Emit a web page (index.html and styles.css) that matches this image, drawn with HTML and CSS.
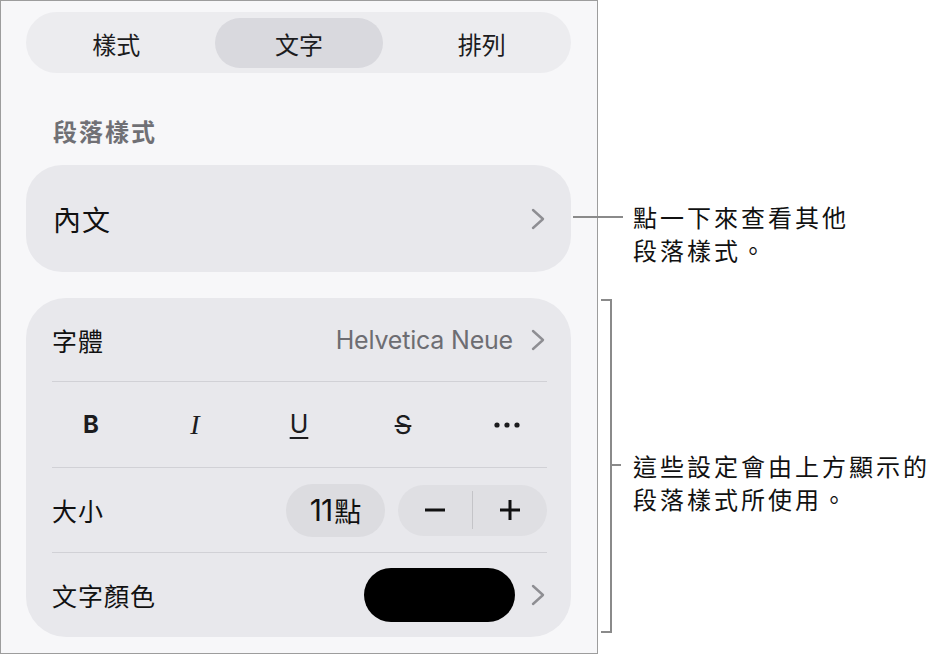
FILE: index.html
```html
<!DOCTYPE html>
<html lang="zh-Hant">
<head>
<meta charset="utf-8">
<title>文字格式</title>
<link rel="stylesheet" href="styles.css">
</head>
<body>
<div class="page">
  <div class="panel">
    <div class="segmented">
      <div class="seg">樣式</div>
      <div class="seg seg-active">文字</div>
      <div class="seg">排列</div>
    </div>

    <div class="section-label">段落樣式</div>

    <div class="card card-style">
      <span class="style-name">內文</span>
      <svg class="chevron" viewBox="0 0 14 22" width="14" height="22"><polyline points="2,2 12,11 2,20" /></svg>
    </div>

    <div class="card card-settings">
      <div class="row row-font">
        <span class="row-label">字體</span>
        <span class="row-value">Helvetica Neue</span>
        <svg class="chevron" viewBox="0 0 14 22" width="14" height="22"><polyline points="2,2 12,11 2,20" /></svg>
      </div>
      <div class="divider"></div>
      <div class="row row-format">
        <span class="fmt fmt-b">B</span>
        <span class="fmt fmt-i">I</span>
        <span class="fmt fmt-u">U</span>
        <span class="fmt fmt-s">S</span>
        <span class="fmt fmt-more">
          <svg viewBox="0 0 26 6" width="26" height="6"><circle cx="3" cy="3" r="2.6"/><circle cx="13" cy="3" r="2.6"/><circle cx="23" cy="3" r="2.6"/></svg>
        </span>
      </div>
      <div class="divider"></div>
      <div class="row row-size">
        <span class="row-label">大小</span>
        <span class="size-pill"><span class="size-num">11</span>點</span>
        <div class="stepper">
          <span class="step">
            <svg viewBox="0 0 22 22" width="22" height="22"><line x1="1" y1="11" x2="21" y2="11"/></svg>
          </span>
          <span class="step-sep"></span>
          <span class="step">
            <svg viewBox="0 0 22 22" width="22" height="22"><line x1="1" y1="11" x2="21" y2="11"/><line x1="11" y1="1" x2="11" y2="21"/></svg>
          </span>
        </div>
      </div>
      <div class="divider"></div>
      <div class="row row-color">
        <span class="row-label">文字顏色</span>
        <span class="color-swatch"></span>
        <svg class="chevron" viewBox="0 0 14 22" width="14" height="22"><polyline points="2,2 12,11 2,20" /></svg>
      </div>
    </div>
  </div>

  <div class="callout callout-one">
    <span class="leader"></span>
    <p class="callout-text">點一下來查看其他<br>段落樣式。</p>
  </div>

  <div class="callout callout-two">
    <span class="bracket"></span>
    <span class="bracket-tick"></span>
    <p class="callout-text">這些設定會由上方顯示的<br>段落樣式所使用。</p>
  </div>
</div>
</body>
</html>
```
FILE: styles.css
```css
* { box-sizing: border-box; }

html, body {
  margin: 0;
  padding: 0;
  background: #ffffff;
}

body {
  font-family: "Inter", "Noto Sans CJK TC", "Noto Sans", sans-serif;
  color: #1c1c1e;
}

.page {
  position: relative;
  width: 931px;
  height: 654px;
}

.panel {
  width: 598px;
  height: 654px;
  border: 1px solid #9d9d9d;
  background: #f7f7f9;
  padding: 11px 26px 0 25px;
  display: flex;
  flex-direction: column;
}

/* segmented control */
.segmented {
  height: 61px;
  border-radius: 31px;
  background: #ececef;
  padding: 6px 5px 5px 6px;
  display: flex;
  gap: 14px;
}

.seg {
  flex: 1;
  border-radius: 25px;
  display: flex;
  align-items: center;
  justify-content: center;
  font-family: "Noto Sans CJK TC", sans-serif;
  font-size: 24px;
  font-weight: 400;
  color: #1c1c1e;
}

.seg-active {
  background: #d9d9de;
}

.section-label {
  margin-top: 43px;
  padding-left: 27px;
  height: 30px;
  line-height: 30px;
  font-family: "Noto Sans CJK TC", sans-serif;
  font-size: 24px;
  letter-spacing: 2px;
  font-weight: 600;
  color: #707075;
}

.card {
  background: #e8e8ec;
}

.card-style {
  margin-top: 19px;
  height: 107px;
  border-radius: 36px;
  display: flex;
  align-items: center;
  padding: 0 26px 0 27px;
}

.style-name {
  flex: 1;
  font-family: "Noto Sans CJK TC", sans-serif;
  font-size: 28px;
  letter-spacing: 1px;
  color: #111111;
}

.chevron {
  flex: none;
  fill: none;
  stroke: #8e8e93;
  stroke-width: 2.4;
  stroke-linecap: round;
  stroke-linejoin: round;
}

.card-settings {
  margin-top: 26px;
  height: 339px;
  border-radius: 40px;
  display: flex;
  flex-direction: column;
}

.divider {
  height: 1px;
  background: #d1d1d6;
  margin: 0 24px 0 26px;
}

.row {
  display: flex;
  align-items: center;
  padding: 0 26px;
}

.row-label {
  flex: 1;
  font-family: "Noto Sans CJK TC", sans-serif;
  font-size: 25px;
  letter-spacing: 1px;
  color: #111111;
}

.row-font {
  height: 83px;
}

.row-value {
  font-family: "Inter", "Liberation Sans", sans-serif;
  font-size: 25px;
  letter-spacing: -0.2px;
  color: #6d6d72;
  margin-right: 18px;
}

.row-format {
  height: 85px;
  padding: 0 12px 0 13px;
}

.fmt {
  flex: 1;
  display: flex;
  align-items: center;
  justify-content: center;
  color: #1c1c1e;
  line-height: 1;
}

.fmt-b {
  font-family: "Inter", sans-serif;
  font-weight: 700;
  font-size: 24px;
}

.fmt-i {
  font-family: "Liberation Serif", serif;
  font-style: italic;
  font-size: 28px;
}

.fmt-u {
  font-family: "Inter", sans-serif;
  font-size: 25px;
  text-decoration: underline;
  text-decoration-thickness: 2px;
  text-underline-offset: 4px;
}

.fmt-s {
  font-family: "Inter", sans-serif;
  font-size: 26px;
  text-decoration: line-through;
  text-decoration-thickness: 2px;
}

.fmt-more svg {
  fill: #1c1c1e;
}

.row-size {
  height: 84px;
  padding-right: 24px;
}

.size-pill {
  width: 99px;
  height: 53px;
  border-radius: 27px;
  background: #dcdce0;
  display: flex;
  align-items: center;
  justify-content: center;
  font-family: "Noto Sans CJK TC", sans-serif;
  font-size: 27px;
  color: #111111;
  margin-right: 13px;
}

.size-num {
  font-family: "Inter", sans-serif;
  font-size: 30px;
  letter-spacing: -1px;
  margin-right: 2px;
}

.stepper {
  width: 149px;
  height: 51px;
  border-radius: 26px;
  background: #dfdfe3;
  display: flex;
  align-items: center;
}

.step {
  flex: 1;
  display: flex;
  align-items: center;
  justify-content: center;
}

.step svg {
  stroke: #111111;
  stroke-width: 3;
}

.step-sep {
  width: 1px;
  height: 38px;
  background: #c4c4c8;
}

.row-color {
  height: 84px;
}

.color-swatch {
  width: 151px;
  height: 54px;
  border-radius: 27px;
  background: #000000;
  margin-right: 16px;
}

/* callouts */
.callout {
  position: absolute;
}

.callout-text {
  margin: 0;
  font-family: "Noto Sans CJK TC", sans-serif;
  font-size: 24px;
  letter-spacing: 3px;
  line-height: 33px;
  color: #111111;
}

.callout-one {
  left: 633px;
  top: 200px;
}

.callout-one .leader {
  position: absolute;
  left: -60px;
  top: 16px;
  width: 50px;
  height: 2px;
  background: #8a8a8a;
}

.callout-two {
  left: 633px;
  top: 449px;
}

.callout-two .bracket {
  position: absolute;
  left: -32px;
  top: -150px;
  width: 11px;
  height: 334px;
  border: 2px solid #8a8a8a;
  border-left: none;
}

.callout-two .bracket-tick {
  position: absolute;
  left: -23px;
  top: 15px;
  width: 11px;
  height: 2px;
  background: #8a8a8a;
}
```
